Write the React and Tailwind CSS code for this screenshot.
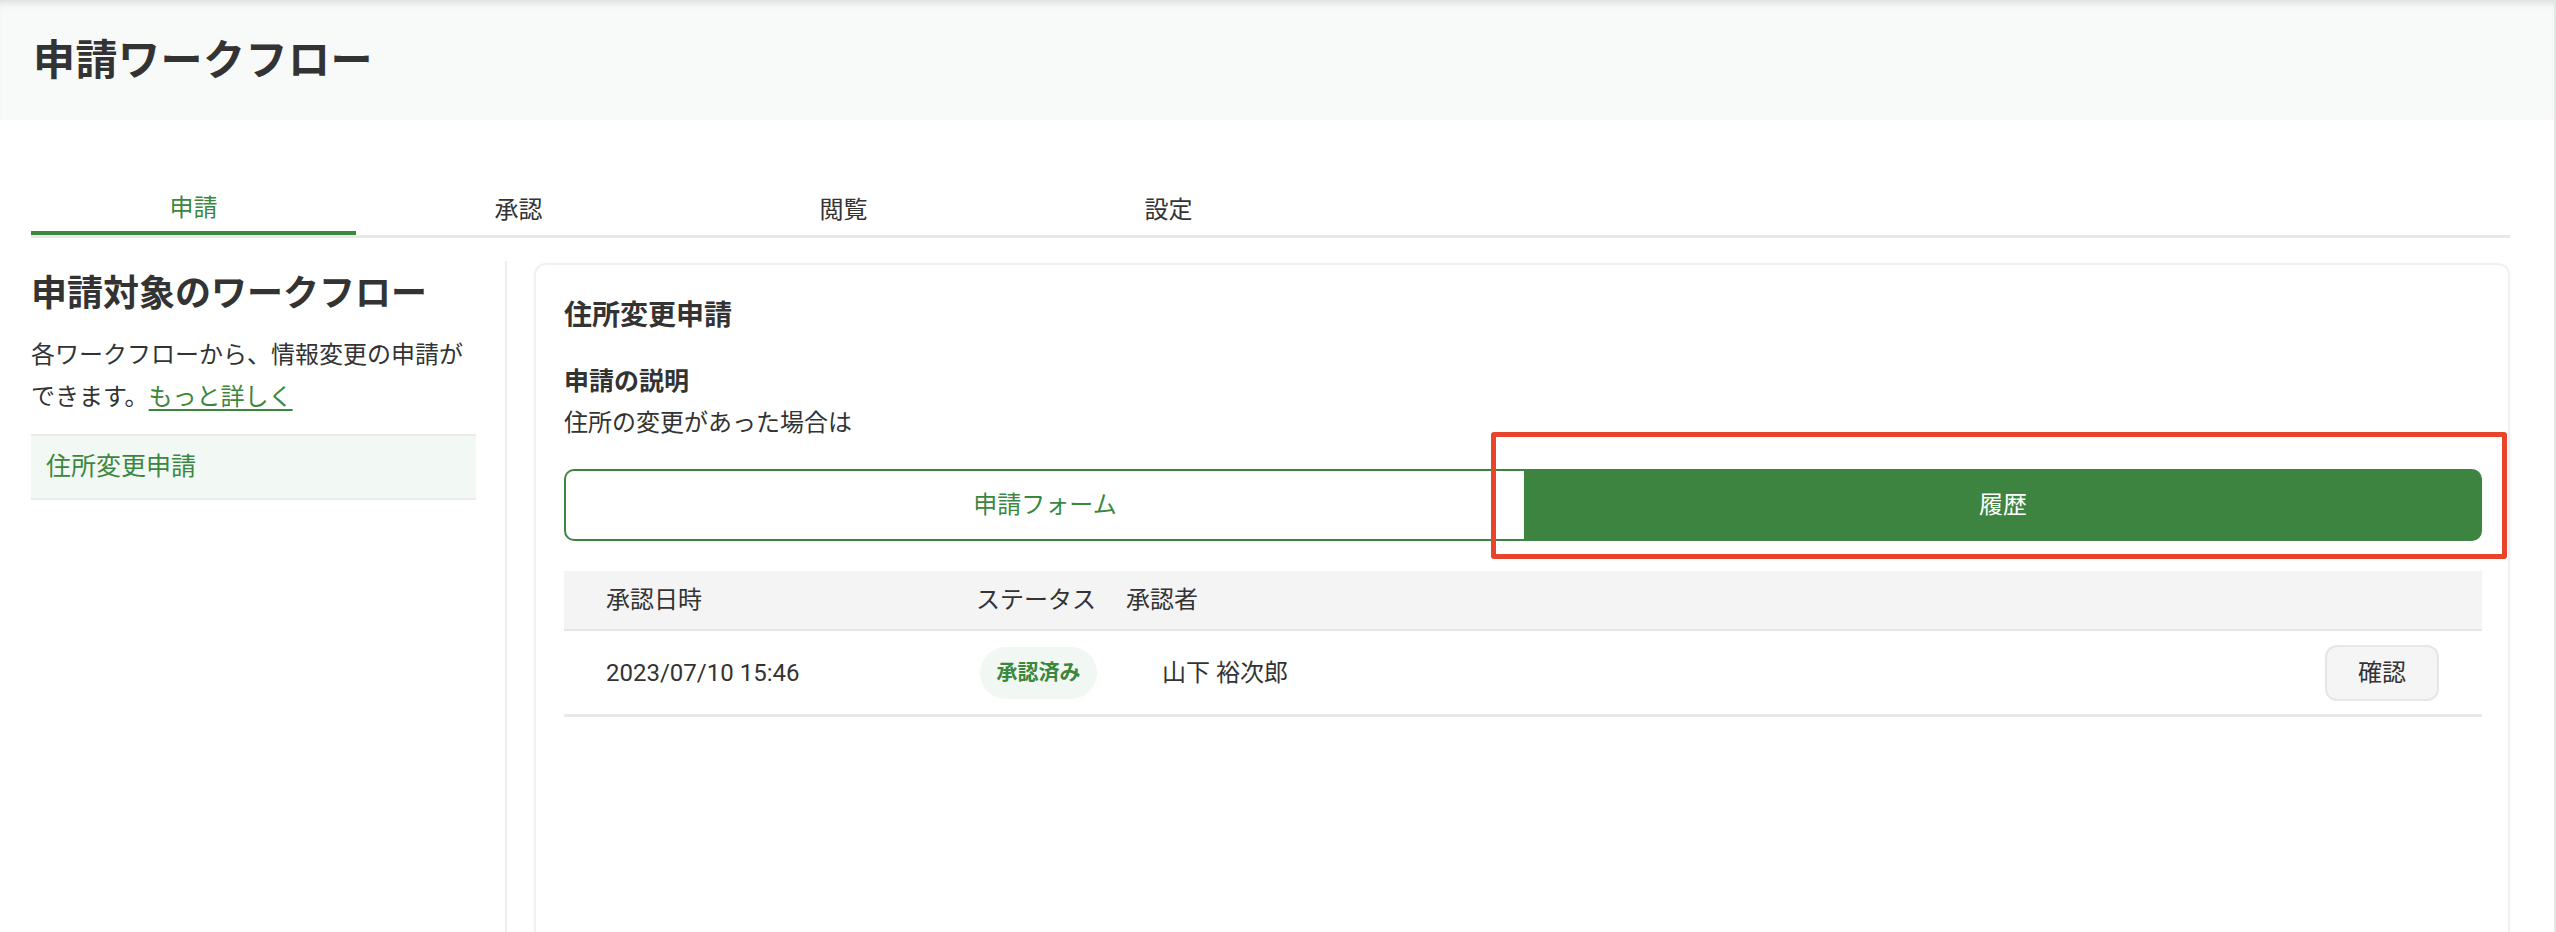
import React from 'react';

const tabs = ['申請', '承認', '閲覧', '設定'];

const history = [
  { id: 1, date: '2023/07/10 15:46', status: '承認済み', approver: '山下 裕次郎' },
];

const App = () => {
  return (
    <div className="relative w-[2556px] h-[932px] overflow-hidden bg-white text-[#333] font-['Roboto','Noto_Sans_CJK_JP',sans-serif] border-r-2 border-[#e6e6e6]">
      {/* Page header */}
      <header className="h-[120px] bg-[#f8faf9] flex items-center px-[33px] shadow-[inset_0_8px_8px_-6px_rgba(0,0,0,0.14)]">
        <h1 className="text-[42px] font-bold tracking-[0.5px] text-[#333]">申請ワークフロー</h1>
      </header>

      <div className="pl-[31px] pr-[44px]">
        {/* Tabs */}
        <div className="mt-[55px] flex border-b-[3px] border-[#e8e8e8]">
          {tabs.map((tab, i) => (
            <div
              key={tab}
              className={
                i === 0
                  ? 'w-[325px] h-[60px] -mb-[3px] pt-[10px] flex items-center justify-center text-[24px] text-[#3b873e] border-b-4 border-[#3b873e]'
                  : 'w-[325px] h-[60px] pt-[10px] flex items-center justify-center text-[24px] text-[#333]'
              }
            >
              {tab}
            </div>
          ))}
        </div>

        {/* Body */}
        <div className="mt-[23px] flex h-[700px]">
          {/* Sidebar */}
          <aside className="w-[476px] pr-[31px] border-r-2 border-[#ededed] shrink-0">
            <div className="w-[445px] pt-[11px]">
              <h2 className="text-[36px] leading-[44px] font-bold">申請対象のワークフロー</h2>
              <p className="mt-[18px] text-[24px] leading-[42px]">
                各ワークフローから、情報変更の申請ができます。
                <a href="#" className="text-[#3b873e] underline underline-offset-4">もっと詳しく</a>
              </p>
              <div className="mt-[16px] h-[66px] flex items-center pl-[15px] bg-[#f2f8f4] border-y-2 border-[#e9ecea] text-[25px] text-[#3b873e]">
                住所変更申請
              </div>
            </div>
          </aside>

          {/* Main card */}
          <main className="ml-[27px] mt-[2px] flex-1 rounded-[12px] border-2 border-[#f1f1f1] shadow-[0_1px_4px_rgba(0,0,0,0.04)] pl-[28px] pr-[26px] pt-[31px]">
            <h3 className="text-[28px] leading-[40px] font-bold">住所変更申請</h3>
            <h4 className="mt-[28px] text-[25px] leading-[36px] font-bold">申請の説明</h4>
            <p className="mt-[5px] text-[24px] leading-[36px]">住所の変更があった場合は</p>

            <div className="mt-[28px] flex h-[72px]">
              <button className="flex-1 rounded-l-[10px] border-2 border-r-0 border-[#3d8441] bg-white text-[24px] text-[#3b873e]">
                申請フォーム
              </button>
              <button className="flex-1 rounded-r-[10px] bg-[#3d8441] text-[24px] text-white">
                履歴
              </button>
            </div>

            {/* History table */}
            <div className="mt-[30px]">
              <div className="grid grid-cols-[412px_150px_1fr_auto] items-center h-[60px] bg-[#f4f4f4] border-b-2 border-[#e6e6e6] text-[24px]">
                <div className="pl-[42px]">承認日時</div>
                <div>ステータス</div>
                <div>承認者</div>
                <div></div>
              </div>
              {history.map((row) => (
                <div key={row.id} className="grid grid-cols-[412px_150px_1fr_auto] items-center h-[86px] border-b-[3px] border-[#e8e8e8] text-[24px]">
                  <div className="pl-[42px]">{row.date}</div>
                  <div className="pl-[4px]">
                    <span className="inline-flex items-center justify-center w-[117px] h-[52px] rounded-full bg-[#f1f7f2] text-[21px] font-bold text-[#3b873e]">
                      {row.status}
                    </span>
                  </div>
                  <div className="pl-[36px]">{row.approver}</div>
                  <div className="pr-[43px]">
                    <button className="w-[114px] h-[56px] rounded-[12px] bg-[#f5f5f5] border-2 border-[#e6e6e6] text-[24px] text-[#333]">
                      確認
                    </button>
                  </div>
                </div>
              ))}
            </div>
          </main>
        </div>
      </div>

      {/* Annotation highlight */}
      <div className="absolute left-[1491px] top-[432px] w-[1016px] h-[127px] border-[5px] border-[#e8432b] rounded-[3px] pointer-events-none"></div>
    </div>
  );
};

export default App;
